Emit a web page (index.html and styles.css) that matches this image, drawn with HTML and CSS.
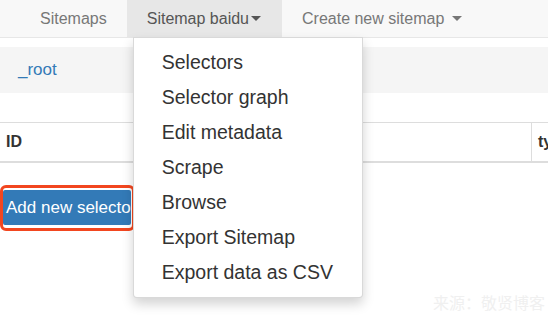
FILE: index.html
```html
<!DOCTYPE html>
<html>
<head>
<meta charset="utf-8">
<link rel="stylesheet" href="styles.css">
</head>
<body>
<nav class="navbar">
  <ul class="nav">
    <li class="nav-item">Sitemaps</li>
    <li class="nav-item active">Sitemap baidu<span class="caret"></span>
      <ul class="dropdown">
        <li>Selectors</li>
        <li>Selector graph</li>
        <li>Edit metadata</li>
        <li>Scrape</li>
        <li>Browse</li>
        <li>Export Sitemap</li>
        <li>Export data as CSV</li>
      </ul>
    </li>
    <li class="nav-item">Create new sitemap <span class="caret spaced"></span></li>
  </ul>
</nav>
<main class="content">
  <div class="breadcrumb"><a class="crumb">_root</a></div>
  <table class="table">
    <thead>
      <tr><th class="col-id">ID</th><th class="col-type">type</th></tr>
    </thead>
  </table>
  <div class="btn-wrap">
    <div class="btn">Add new selector</div>
    <div class="highlight"></div>
  </div>
</main>
<div class="watermark">来源：敬贤博客</div>
</body>
</html>
```

FILE: styles.css
```css
html, body {
  margin: 0;
  padding: 0;
  background: #fff;
  overflow: hidden;
  width: 548px;
  height: 317px;
  font-family: "Liberation Sans", Arial, sans-serif;
  color: #333;
}

.navbar {
  height: 37px;
  background: #f8f8f8;
  border-bottom: 1px solid #e7e7e7;
}

.nav {
  list-style: none;
  margin: 0;
  padding: 0 0 0 20px;
  display: flex;
  height: 37px;
}

.nav-item {
  position: relative;
  padding: 0 20px;
  line-height: 37px;
  font-size: 16px;
  color: #777;
  white-space: nowrap;
}

.nav-item.active {
  background: #e7e7e7;
  color: #555;
  padding: 0 21px 0 20px;
}

.caret {
  display: inline-block;
  width: 0;
  height: 0;
  margin-left: 2px;
  vertical-align: middle;
  border-top: 5px solid;
  border-left: 5px solid transparent;
  border-right: 5px solid transparent;
  position: relative;
  top: -1px;
}

.caret.spaced {
  margin-left: 3px;
}

.dropdown {
  position: absolute;
  left: 6px;
  top: 37px;
  width: 228px;
  margin: 0;
  padding: 7px 0 7px;
  list-style: none;
  background: #fff;
  border: 1px solid rgba(0, 0, 0, 0.15);
  border-radius: 0 0 4px 4px;
  box-shadow: 0 6px 12px rgba(0, 0, 0, 0.175);
  z-index: 10;
}

.dropdown li {
  height: 35px;
  line-height: 35px;
  padding-left: 28px;
  font-size: 19.5px;
  color: #333;
}

.content {
  padding-top: 9px;
}

.breadcrumb {
  height: 46px;
  line-height: 46px;
  background: #f5f5f5;
  padding: 0 18px;
}

.crumb {
  color: #337ab7;
  font-size: 17px;
}

.table {
  margin-top: 29px;
  width: 620px;
  border-collapse: collapse;
}

.table th {
  text-align: left;
  font-size: 16px;
  font-weight: bold;
  color: #333;
  height: 38px;
  padding: 0 6px;
  border-top: 1px solid #ddd;
  border-bottom: 2px solid #ddd;
}

.col-id {
  width: 519px;
}

.col-type {
  border-left: 1px solid #ddd;
}

.btn-wrap {
  position: relative;
  margin: 27px 0 0 3px;
  width: 128px;
}

.btn {
  height: 35px;
  line-height: 35px;
  padding-left: 3px;
  background: #337ab7;
  color: #fff;
  font-size: 17px;
  white-space: nowrap;
  overflow: hidden;
  border-radius: 2px;
}

.highlight {
  position: absolute;
  left: -3px;
  top: -5px;
  width: 129px;
  height: 40px;
  border: 3px solid #f2461f;
  border-radius: 6px;
}

.watermark {
  position: absolute;
  right: 3px;
  bottom: 3px;
  font-family: "Noto Sans CJK SC", sans-serif;
  font-size: 16px;
  color: #f0f0f0;
}
```
